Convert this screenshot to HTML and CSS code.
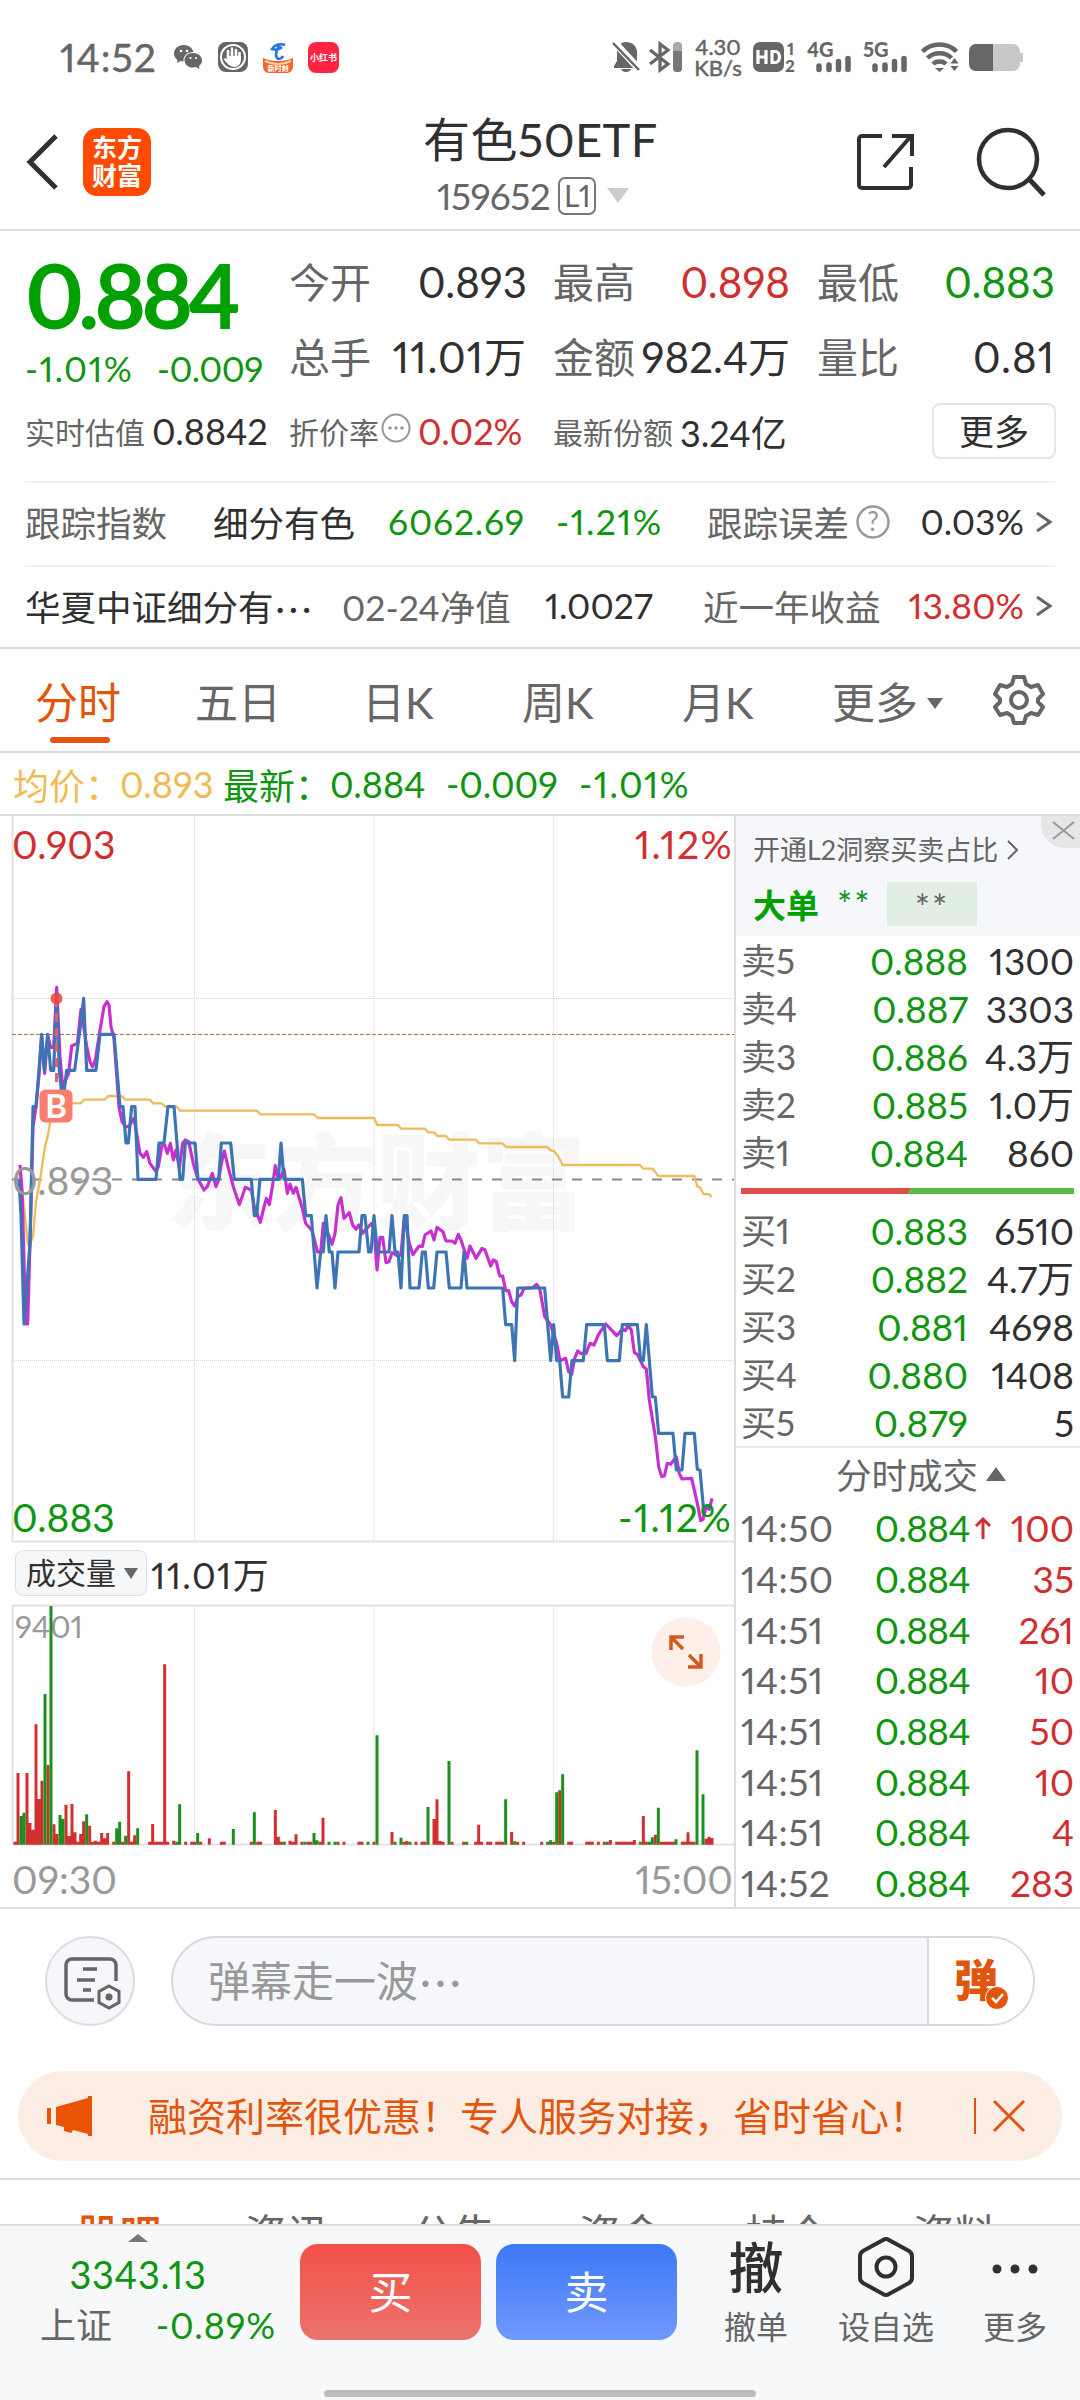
FILE: index.html
```html
<!DOCTYPE html>
<html lang="zh-CN">
<head>
    <meta charset="UTF-8">
    <meta name="viewport" content="width=device-width, initial-scale=1.0">
    <title>有色50ETF 159652</title>
    <link rel="stylesheet" href="styles.css">
</head>
<body>

    <div class="status">
        <span class="clock">14:52</span>
        <svg class="ic-wechat" width="30" height="26" viewBox="0 0 30 26"><path fill="#666" d="M11 1C5 1 1 5 1 9.500c0 3 1.500 5 3.500 6.500L4 19l3.500-2 3 .5C10 12 14 8 20.500 8 19.500 4 15.500 1 11 1z"/><path fill="#666" d="M20 9c-5 0-8.500 3.200-8.500 7.200S15 23.500 20 23.500l3-.5 3.500 2-.5-3c2-1.500 3-3.500 3-5.800C29 12.200 25 9 20 9z"/><g fill="#fff"><circle cx="8" cy="7" r="1.300"/><circle cx="14" cy="7" r="1.300"/><circle cx="17.500" cy="14" r="1.100"/><circle cx="23" cy="14" r="1.100"/></g></svg>
        <svg class="ic-hand" width="30" height="30" viewBox="0 0 30 30"><rect width="30" height="30" rx="8" fill="#666"/><circle cx="15" cy="15" r="12" fill="none" stroke="#fff" stroke-width="2"/><path d="M10 17V9M14 15V6.500M18 15V8M21.500 17v-6" stroke="#fff" stroke-width="2.600" stroke-linecap="round"/><path d="M9 14h14v3c0 5-3 8-6.500 8S9 22 5.500 17l2-1 2 2z" fill="#fff"/></svg>
        <svg class="ic-tel" width="30" height="32" viewBox="0 0 30 32"><path d="M0 17c8 4 22 4 30 0v9a6 6 0 0 1-6 6H6a6 6 0 0 1-6-6z" fill="#f0662c"/><path d="M2 20c8 4 18 4 26 0" stroke="#ffd9a8" stroke-width="2" fill="none"/><text x="15" y="30" class="tel-text">新时刻</text><path d="M22 4c-5-2-11 0-13 4 3 1 7 1 10-2M17 3c-3 5-6 12-2 15 2 0 4-1 5-3" fill="none" stroke="#2477dd" stroke-width="2.600"/></svg>
        <span class="ic-xhs">小红书</span>
        <span class="grow"></span>
        <svg class="ic-bell" width="28" height="32" viewBox="0 0 28 32"><path d="M14 1c6 0 11 4 11 10v9l2 5v2H2v-2l3-5v-9c0-6 4-10 9-10zM9 28h10c-1 4-9 4-10 0z" fill="#666"/><path d="M2 1l27 29" stroke="#fff" stroke-width="7"/><path d="M1 2l26 27" stroke="#666" stroke-width="2.500"/></svg>
        <svg class="ic-bt" width="34" height="30" viewBox="0 0 34 30"><path d="M1 8l18 14-8 6V2l8 6L1 22" fill="none" stroke="#666" stroke-width="3.200"/><rect x="24" width="9" height="30" rx="4" fill="#aaa"/><path d="M24 9h9v17a4 4 0 0 1-4 4h-1a4 4 0 0 1-4-4z" fill="#777"/></svg>
        <span class="speed">4.30<br>KB/s</span>
        <svg class="ic-hd" width="44" height="32" viewBox="0 0 44 32"><rect y="1" width="31" height="30" rx="7" fill="#666"/><path d="M5 9v14M13 9v14M5 16h8M19 10.500h3c6 0 6 11 0 11h-3z" stroke="#fff" stroke-width="3.200" fill="none"/><text x="34" y="14" class="sim">1</text><text x="32" y="31" class="sim">2</text></svg>
        <svg class="ic-sig" width="46" height="32" viewBox="0 0 46 32"><text x="0" y="16" class="net">4G</text><path d="M12 25v3.500M22 24v4.500M31.500 20.500v8M41 17.500v11" stroke="#666" stroke-width="5.500" stroke-linecap="round"/></svg>
        <svg class="ic-sig" width="46" height="32" viewBox="0 0 46 32"><text x="0" y="16" class="net">5G</text><path d="M12 25v3.500M22 24v4.500M31.500 20.500v8M41 17.500v11" stroke="#666" stroke-width="5.500" stroke-linecap="round"/></svg>
        <svg class="ic-wifi" width="38" height="30" viewBox="0 0 38 30"><g fill="none" stroke="#666" stroke-width="4.500"><path d="M1.500 9.500c9-9.500 25-9.500 34 0"/><path d="M6.500 16c6-6.500 18-6.500 24 0"/><path d="M12 22c3-3.500 10-3.500 13 0"/></g><path d="M14 26h9l-4.500 4z" fill="#666"/><path d="M33.500 16l4 5.500h-8zM33.500 29l4-5h-8z" fill="#666"/></svg>
        <span class="battery"><i></i></span>
    </div>

    <header class="header">
        <svg class="back" width="34" height="56" viewBox="0 0 34 56"><path d="M30 2L4 28l26 26" fill="none" stroke="#303030" stroke-width="5"/></svg>
        <div class="logo">东方<br>财富</div>
        <div class="title">
            <h1>有色50ETF</h1>
            <div class="code">159652<span class="level">L1</span><i class="tri-down"></i></div>
        </div>
        <svg class="share" width="60" height="60" viewBox="0 0 60 60"><path d="M26 4H6a3 3 0 0 0-3 3v46a3 3 0 0 0 3 3h46a3 3 0 0 0 3-3V35M36 4h20v20M56 3L28 35" fill="none" stroke="#303030" stroke-width="4"/></svg>
        <svg class="search" width="70" height="70" viewBox="0 0 70 70"><circle cx="32" cy="32" r="29" fill="none" stroke="#303030" stroke-width="4.500"/><path d="M53 52l15 16" stroke="#303030" stroke-width="5"/></svg>
    </header>

    <section class="quote">
        <div class="quote-main">
            <div class="last">
                <div class="price">0.884</div>
                <div class="change"><span class="pct">-1.01%</span><span>-0.009</span></div>
            </div>
            <dl class="stats">
                <dt>今开</dt><dd>0.893</dd>
                <dt>最高</dt><dd class="up">0.898</dd>
                <dt>最低</dt><dd class="down">0.883</dd>
                <dt>总手</dt><dd class="wide">11.01万</dd>
                <dt>金额</dt><dd>982.4万</dd>
                <dt>量比</dt><dd class="wide">0.81</dd>
            </dl>
        </div>
        <div class="quote-extra">
            <span class="pair"><small>实时估值</small><b>0.8842</b></span>
            <span class="pair"><small>折价率</small><svg width="30" height="30" viewBox="0 0 30 30"><circle cx="15" cy="15" r="13.500" fill="none" stroke="#999" stroke-width="2"/><g fill="#999"><circle cx="9" cy="15" r="1.800"/><circle cx="15" cy="15" r="1.800"/><circle cx="21" cy="15" r="1.800"/></g></svg><b class="up">0.02%</b></span>
            <span class="pair"><small>最新份额</small><b>3.24亿</b></span>
            <button class="more">更多</button>
        </div>
        <div class="line track">
            <span class="gray">跟踪指数</span>
            <span>细分有色</span>
            <span class="down points">6062.69</span>
            <span class="down pct">-1.21%</span>
            <span class="gray">跟踪误差</span>
            <svg width="34" height="34" viewBox="0 0 34 34"><circle cx="17" cy="17" r="15.500" fill="none" stroke="#999" stroke-width="2.500"/><text x="17" y="26" class="ask">?</text></svg>
            <span class="end">0.03%</span>
            <svg width="18" height="22" viewBox="0 0 18 22"><path d="M2 2l13 9-13 9" fill="none" stroke="#666" stroke-width="3"/></svg>
        </div>
        <div class="line fund">
            <span>华夏中证细分有<span class="dots">···</span></span>
            <span class="gray">02-24净值</span>
            <span>1.0027</span>
            <span class="gray">近一年收益</span>
            <span class="up end">13.80%</span>
            <svg width="18" height="22" viewBox="0 0 18 22"><path d="M2 2l13 9-13 9" fill="none" stroke="#666" stroke-width="3"/></svg>
        </div>
    </section>

    <nav class="tabs">
        <span class="active">分时</span>
        <span>五日</span>
        <span>日K</span>
        <span>周K</span>
        <span>月K</span>
        <span>更多<i class="tri-small"></i></span>
        <svg width="52" height="52" viewBox="0 0 52 52"><g fill="none" stroke="#666" stroke-width="4" stroke-linejoin="round"><path d="M21 3h10l2 7 5 3 7-2 5 9-5 5v3l5 5-5 8-7-2-5 3-2 7H21l-2-7-5-3-7 2-5-8 5-5v-3l-5-5 5-9 7 2 5-3z"/><circle cx="26" cy="26" r="8"/></g></svg>
    </nav>

    <div class="legend">
        <span class="avg">均价：</span><span class="avg">0.893</span>
        <span>最新：</span><span>0.884</span><span>-0.009</span><span class="pct">-1.01%</span>
    </div>

    <main class="board">
        <div class="charts">
            <svg class="price-chart" width="734" height="727" viewBox="0 816 734 727">
                <g class="watermark"><text x="166" y="1221">东方财富</text></g>
                <g class="frame">
                    <path d="M12.500 816v726M12 1541.500h722"/>
                </g>
                <path class="grid" d="M194.500 816v726M374 816v726M553.500 816v726M12 998.500h722M12 1360.500h722"/>
                <path class="cost" d="M12 1034.500h722"/>
                <path class="base" d="M12 1179.500h722"/>
                <g transform="translate(0 960) scale(.33333)" fill="none" stroke-linejoin="round">
                    <polyline class="l-avg" points="60,640 66,690 84,853 90,853 99,830 108,725 120,660 135,560 144,525 153,470 165,450 190,440 210,430 242,430 252,419 314,419 325,408 365,408 376,419 450,419 459,430 485,430 495,440 530,440 540,452 770,452 782,463 942,463 953,474 1122,474 1132,495 1194,495 1204,506 1275,506 1285,517 1302,517 1312,528 1338,528 1348,539 1427,539 1437,550 1507,550 1518,561 1642,561 1652,571 1662,573 1675,590 1688,615 1920,615 1930,626 1958,626 1975,648 2083,648 2092,680 2100,682 2110,702 2128,703 2135,712"/>
                    <polyline class="l-index" points="60,615 66,690 72,900 76,1092 83,1092 90,850 99,500 108,440 117,345 125,225 134,340 143,225 152,262 161,262 170,82 180,290 188,380 206,340 215,258 232,250 243,148 251,200 260,258 270,305 278,320 286,300 300,210 312,140 321,125 327,135 333,200 342,235 357,440 366,485 378,500 386,500 402,475 420,580 430,592 440,575 450,610 468,635 475,620 487,550 494,555 502,580 511,550 520,600 528,570 538,625 548,550 556,540 566,545 580,610 594,658 612,690 622,680 637,640 648,680 656,660 664,610 673,573 684,620 700,680 718,734 736,682 754,690 763,740 781,787 790,750 799,715 808,734 817,680 826,617 835,658 843,650 852,628 862,700 870,672 880,700 888,682 907,745 917,790 936,812 953,876 962,876 970,790 988,830 996,853 1005,820 1014,735 1023,713 1032,775 1048,758 1058,795 1068,808 1076,795 1088,820 1100,805 1115,790 1122,810 1131,930 1140,832 1148,832 1158,908 1167,905 1176,878 1194,888 1203,885 1213,770 1228,850 1239,884 1257,858 1267,860 1275,825 1293,813 1302,840 1311,802 1329,815 1338,843 1356,843 1365,850 1375,823 1383,840 1401,895 1410,858 1428,895 1446,865 1455,870 1472,918 1480,900 1489,905 1499,948 1508,948 1517,992 1526,992 1535,1025 1544,1038 1555,1008 1563,1005 1572,985 1598,983 1610,973 1619,985 1634,1070 1652,1095 1670,1150 1680,1202 1697,1195 1706,1235 1715,1243 1724,1195 1733,1173 1742,1180 1758,1180 1770,1150 1782,1155 1795,1125 1817,1092 1830,1105 1850,1127 1867,1108 1876,1112 1885,1097 1894,1110 1903,1178 1912,1183 1930,1220 1939,1227 1948,1320 1966,1430 1976,1520 1985,1550 1993,1548 2002,1510 2012,1513 2029,1490 2038,1540 2046,1557 2075,1555 2092,1630 2102,1682 2109,1678 2118,1642 2128,1648 2136,1615"/>
                    <polyline class="l-price" points="57,658 63,767 72,1092 80,984 90,850 99,440 108,440 117,331 125,223 133,331 143,223 152,331 161,331 170,100 178,331 188,430 200,331 224,331 238,223 251,115 260,331 288,331 300,223 342,223 360,440 369,440 378,549 385,549 395,440 405,440 414,658 468,658 477,549 492,549 504,440 522,440 540,658 548,658 556,549 585,549 594,658 656,658 664,549 692,549 703,658 754,658 763,767 770,767 780,658 835,658 843,549 852,658 907,658 917,767 934,767 951,984 962,876 970,876 978,767 988,876 996,876 1005,984 1014,876 1077,876 1086,767 1095,767 1106,876 1113,876 1122,767 1132,876 1167,876 1176,767 1185,876 1194,876 1203,984 1213,767 1221,767 1230,984 1257,984 1267,876 1276,876 1285,984 1301,984 1311,876 1338,876 1348,984 1383,984 1392,876 1401,984 1508,984 1517,1094 1535,1094 1544,1202 1553,984 1634,984 1652,1202 1661,1094 1670,1202 1679,1202 1688,1311 1706,1311 1716,1202 1750,1202 1760,1094 1813,1094 1822,1202 1858,1202 1867,1094 1912,1094 1922,1202 1930,1202 1939,1094 1957,1310 1966,1312 1976,1420 2019,1420 2029,1530 2046,1530 2055,1420 2083,1420 2092,1528 2100,1530 2110,1640 2135,1640"/>
                </g>
                <path class="buy-line" d="M56.500 998v90"/>
                <circle cx="56.500" cy="998.500" r="6" fill="#f0443c" fill-opacity=".85"/>
                <rect x="39.500" y="1089.500" width="33" height="33" rx="6" fill="#fb7d72"/>
                <text x="56" y="1118" class="buy-mark">B</text>
                <text x="12" y="1195" class="ax gray-ax">0.893</text>
                <text x="12" y="859" class="ax up-ax">0.903</text>
                <text x="733" y="859" class="ax up-ax right">1.12%</text>
                <text x="12" y="1532" class="ax down-ax">0.883</text>
                <text x="732" y="1532" class="ax down-ax right">-1.12%</text>
            </svg>

            <div class="vol-head"><span class="picker">成交量<i class="tri-pick"></i></span><span class="pct">11.01万</span></div>

            <div class="vol-body">
                <svg class="vol-chart" width="734" height="241" viewBox="0 1605 734 241">
                    <path class="frame" d="M12.500 1605v240M12 1605.500h722M12 1844.500h722"/>
                    <path class="grid" d="M194.500 1606v238M374 1606v238M553.500 1606v238"/>
                    <text x="15" y="1638" class="vol-max">9401</text>
                    <g transform="translate(0 1530) scale(.33333)" stroke-width="9" fill="none">
                        <path stroke="#d23030" d="M45 944V935M54 944V729M81 944V729M90 944V879M99 944V899M108 944V583M117 944V807M126 944V752M162 944V883M171 944V912M198 944V824M207 944V918M216 944V822M225 944V907M234 944V935M242 944V912M251 944V874M269 944V887M278 944V935M287 944V932M296 944V935M305 944V909M314 944V925M323 944V909M341 944V935M368 944V935M386 944V724M395 944V935M404 944V916M449 944V935M458 944V882M467 944V935M476 944V935M485 944V935M494 944V403M503 944V935M521 944V932M557 944V935M575 944V935M584 944V935M602 944V935M628 944V925M664 944V935M673 944V935M754 944V935M773 944V935M782 944V935M826 944V840M835 944V920M844 944V935M870 944V932M879 944V935M888 944V913M906 944V935M924 944V935M933 944V935M960 944V935M969 944V863M1014 944V935M1032 944V935M1077 944V935M1086 944V935M1122 944V935M1176 944V906M1212 944V935M1221 944V933M1248 944V935M1266 944V935M1275 944V935M1302 944V867M1311 944V808M1320 944V933M1329 944V935M1356 944V935M1391 944V935M1427 944V935M1436 944V884M1445 944V935M1463 944V935M1472 944V935M1490 944V935M1499 944V935M1508 944V935M1535 944V906M1553 944V935M1571 944V935M1625 944V935M1661 944V935M1706 944V935M1715 944V935M1760 944V935M1769 944V935M1777 944V935M1795 944V935M1813 944V935M1831 944V930M1850 944V935M1859 944V935M1868 944V935M1877 944V935M1886 944V935M1895 944V935M1903 944V930M1930 944V858M1939 944V935M1966 944V914M1984 944V935M1993 944V935M2002 944V935M2011 944V935M2020 944V935M2047 944V935M2055 944V935M2064 944V907M2073 944V935M2082 944V935M2118 944V926M2127 944V920M2136 944V924"/>
                        <path stroke="#1c901c" d="M63 944V858M72 944V848M135 944V492M153 944V228M180 944V855M189 944V867M260 944V853M350 944V895M359 944V875M377 944V917M413 944V895M530 944V935M539 944V823M593 944V909M700 944V897M763 944V847M853 944V935M915 944V935M942 944V909M951 944V931M987 944V935M1005 944V935M1104 944V935M1131 944V616M1185 944V935M1203 944V923M1230 944V935M1284 944V831M1347 944V693M1400 944V935M1517 944V808M1544 944V934M1643 944V935M1652 944V931M1670 944V787M1688 944V733M1822 944V935M1921 944V935M1948 944V935M1957 944V922M1975 944V833M2028 944V928M2091 944V661M2109 944V793"/>
                        <path stroke="#a04a1c" d="M144 944V705M1679 944V781"/>
                    </g>
                </svg>
                <svg class="expand" width="70" height="70" viewBox="0 0 70 70"><circle cx="35" cy="35" r="34.500" fill="#fef0e9"/><path d="M33 20H20v13M20 20l12 12M38 38l12 12M50 37v13H37" fill="none" stroke="#d4581a" stroke-width="3.500"/></svg>
            </div>
            <div class="times"><span>09:30</span><span>15:00</span></div>
        </div>

        <aside class="depth">
            <div class="l2">
                <svg class="l2-close" width="39" height="32" viewBox="0 0 39 32"><path d="M0 0h39v32H24A24 24 0 0 1 0 8z" fill="#e5e6e8"/><path d="M12 6l21 17M33 6L12 23" stroke="#999" stroke-width="2"/></svg>
                <div class="l2-title">开通L2洞察买卖占比<svg width="12" height="22" viewBox="0 0 12 22"><path d="M1 2l9 9-9 9" fill="none" stroke="#666" stroke-width="2"/></svg></div>
                <div class="l2-row"><b>大单</b><span class="stars">**</span><span class="mask">**</span></div>
            </div>
            <div class="orders">
                <div><span>卖5</span><b>0.888</b><em>1300</em></div>
                <div><span>卖4</span><b>0.887</b><em>3303</em></div>
                <div><span>卖3</span><b>0.886</b><em>4.3万</em></div>
                <div><span>卖2</span><b>0.885</b><em>1.0万</em></div>
                <div><span>卖1</span><b>0.884</b><em>860</em></div>
            </div>
            <div class="ratio"></div>
            <div class="orders">
                <div><span>买1</span><b>0.883</b><em>6510</em></div>
                <div><span>买2</span><b>0.882</b><em>4.7万</em></div>
                <div><span>买3</span><b>0.881</b><em>4698</em></div>
                <div><span>买4</span><b>0.880</b><em>1408</em></div>
                <div><span>买5</span><b>0.879</b><em>5</em></div>
            </div>
            <div class="deal-title">分时成交<i class="tri-up"></i></div>
            <div class="deals">
                <div><span>14:50</span><b>0.884</b><svg width="16" height="22" viewBox="0 0 16 22"><path d="M8 22V2M1 9l7-7 7 7" fill="none" stroke="#d12f2f" stroke-width="3"/></svg><em>100</em></div>
                <div><span>14:50</span><b>0.884</b><i></i><em>35</em></div>
                <div><span>14:51</span><b>0.884</b><i></i><em>261</em></div>
                <div><span>14:51</span><b>0.884</b><i></i><em>10</em></div>
                <div><span>14:51</span><b>0.884</b><i></i><em>50</em></div>
                <div><span>14:51</span><b>0.884</b><i></i><em>10</em></div>
                <div><span>14:51</span><b>0.884</b><i></i><em>4</em></div>
                <div><span>14:52</span><b>0.884</b><i></i><em>283</em></div>
            </div>
        </aside>
    </main>

    <div class="danmu">
        <span class="danmu-set"><svg width="56" height="52" viewBox="0 0 56 52"><path d="M30 43H8a6 6 0 0 1-6-6V8a6 6 0 0 1 6-6h38a6 6 0 0 1 6 6v16" fill="none" stroke="#666" stroke-width="3.500"/><path d="M19 12h14M13 23h18M19 33h8" stroke="#666" stroke-width="3.500"/><path d="M45 29l10 5.500v11L45 51l-10-5.500v-11z" fill="none" stroke="#666" stroke-width="3"/><circle cx="45" cy="40" r="3.500" fill="#666"/></svg></span>
        <div class="danmu-input">
            <span class="placeholder">弹幕走一波<span class="dots">···</span></span>
            <span class="danmu-btn">弹<svg width="24" height="24" viewBox="0 0 24 24"><circle cx="12" cy="12" r="11.500" fill="#e1560c" stroke="#fff"/><path d="M7 12l4 4 7-8" fill="none" stroke="#fff" stroke-width="2.500"/></svg></span>
        </div>
    </div>

    <div class="notice">
        <svg width="48" height="42" viewBox="0 0 48 42"><path d="M2 13v16" stroke="#e95504" stroke-width="4"/><path d="M9 12l32-9V1h4v40h-4v-2l-15-4-2 3-7-2v-4l-8-2z" fill="#e95504"/></svg>
        <p>融资利率很优惠！专人服务对接，省时省心！</p>
        <span class="bar"></span>
        <svg width="34" height="34" viewBox="0 0 34 34"><path d="M2 2l30 30M32 2L2 32" stroke="#e1560c" stroke-width="3"/></svg>
    </div>

    <nav class="subtabs">
        <span class="active">股吧</span><span>资讯</span><span>公告</span><span>资金</span><span>持仓</span><span>资料</span>
    </nav>

    <footer class="footer">
        <div class="index">
            <i class="tri-index"></i>
            <div class="index-value">3343.13</div>
            <div class="index-row"><span>上证</span><span class="down">-0.89%</span></div>
        </div>
        <button class="buy">买</button>
        <button class="sell">卖</button>
        <div class="tool"><span class="tool-char">撤</span><span>撤单</span></div>
        <div class="tool"><svg width="56" height="60" viewBox="0 0 56 60"><path d="M25 3q3-2 6 0l20 11q3 2 3 5v22q0 3-3 5L31 57q-3 2-6 0L5 46q-3-2-3-5V19q0-3 3-5z" fill="none" stroke="#303030" stroke-width="4"/><circle cx="28" cy="30" r="9.500" fill="none" stroke="#303030" stroke-width="4"/></svg><span>设自选</span></div>
        <div class="tool"><svg width="48" height="60" viewBox="0 0 48 60"><g fill="#303030"><circle cx="6" cy="32" r="4.500"/><circle cx="24" cy="32" r="4.500"/><circle cx="42" cy="32" r="4.500"/></g></svg><span>更多</span></div>
        <span class="home-bar"></span>
    </footer>

</body>
</html>
```
FILE: styles.css
```css
* {
    box-sizing: border-box;
}
body {
    margin: 0;
    width: 1080px;
    height: 2400px;
    overflow: hidden;
    background: #fff;
    color: #303030;
    font-family: Lato, "Noto Sans CJK SC", sans-serif;
    font-variant-numeric: proportional-nums;
    display: flex;
    flex-direction: column;
}
body > * {
    flex: none;
}
h1, p, dl, dd {
    margin: 0;
    font-weight: normal;
}
i, em {
    font-style: normal;
}
svg {
    display: block;
    flex: none;
    overflow: visible;
}
button {
    font-family: inherit;
    padding: 0;
    border: 0;
}
.grow { flex: 1; }
.up { color: #d12f2f; }
.down { color: #109510; }
.gray { color: #666; }
.end { text-align: right; }
.dots { letter-spacing: 4px; padding-left: 2px; }

/* status bar */
.status {
    height: 100px;
    padding: 14px 60px 0 60px;
    display: flex;
    align-items: center;
    color: #666;
}
.clock {
    width: 113px;
    font-size: 39px;
    letter-spacing: 1px;
    -webkit-text-stroke: .4px #666;
}
.ic-hand { margin-left: 15px; }
.ic-tel { margin-left: 15px; }
.tel-text {
    font-size: 7px;
    font-weight: bold;
    fill: #fff;
    text-anchor: middle;
}
.ic-xhs {
    width: 31px;
    height: 31px;
    margin-left: 15px;
    border-radius: 8px;
    background: #ff2442;
    color: #fff;
    font-size: 9px;
    font-weight: bold;
    line-height: 31px;
    text-align: center;
}
.ic-bt { margin-left: 9px; }
.speed {
    width: 50px;
    margin-left: 10px;
    font-size: 22px;
    line-height: 21px;
    text-align: center;
    -webkit-text-stroke: .5px #666;
}
.ic-hd { margin-left: 10px; }
.sim { font-size: 17px; font-weight: 900; fill: #666; }
.net { font-size: 20px; font-weight: 900; fill: #666; }
.ic-sig { margin-left: 10px; }
.ic-wifi { margin-left: 12px; }
.battery {
    position: relative;
    width: 51px;
    height: 27px;
    margin-left: 10px;
    border-radius: 7px;
    background: #c8c8c8;
}
.battery::after {
    content: "";
    position: absolute;
    right: -3px;
    top: 9px;
    width: 3px;
    height: 9px;
    background: #c8c8c8;
}
.battery i {
    display: block;
    width: 24px;
    height: 27px;
    border-radius: 7px 0 0 7px;
    background: #666;
}

/* header */
.header {
    height: 131px;
    border-bottom: 2px solid #ddd;
    padding: 0 34px 0 26px;
    display: grid;
    grid-template-columns: 57px 68px 1fr 60px 70px;
    align-items: center;
}
.logo {
    width: 68px;
    height: 68px;
    border-radius: 14px;
    background: #ff4a00;
    color: #fff;
    font-size: 25px;
    font-weight: bold;
    line-height: 28px;
    text-align: center;
    padding-top: 5px;
}
.header .logo, .header .back, .header .share, .header .search { margin-top: -5px; }
.header .share { margin-left: -60px; }
.title {
    padding: 5px 0 0 272px;
    white-space: nowrap;
}
.title h1 {
    font-size: 47px;
    line-height: 57px;
    letter-spacing: .4px;
}
.code {
    display: flex;
    align-items: center;
    padding-left: 14px;
    color: #666;
    font-size: 37px;
    line-height: 56px;
    letter-spacing: -.6px;
}
.level {
    width: 38px;
    height: 38px;
    margin-left: 8px;
    border: 2px solid #777;
    border-radius: 7px;
    font-size: 30px;
    line-height: 33px;
    text-align: center;
}
.tri-down, .tri-small, .tri-pick {
    display: inline-block;
    border: 11px solid transparent;
    border-top: 15px solid #ccc;
    border-bottom: 0;
    margin-left: 11px;
}

/* quote */
.quote {
    height: 418px;
    border-bottom: 2px solid #ddd;
    padding: 0 25px;
}
.quote-main {
    display: grid;
    grid-template-columns: 264px 1fr;
    height: 163px;
    padding-top: 14px;
}
.price {
    height: 100px;
    color: #00a000;
    font-size: 89px;
    font-weight: bold;
    line-height: 100px;
    letter-spacing: -5.5px;
}
.change {
    display: grid;
    grid-template-columns: 132px 1fr;
    color: #109510;
    font-size: 35px;
    line-height: 46px;
    letter-spacing: -.5px;
}
.pct { letter-spacing: 1.4px; }
.stats {
    display: grid;
    grid-template-columns: 84px 154px 26px 84px 153px 27px 84px 154px;
    grid-auto-rows: 75px;
    line-height: 75px;
    font-size: 42px;
}
.stats dt {
    color: #666;
    font-size: 41px;
}
.stats dt:nth-of-type(3n+2) { grid-column: 4; }
.stats dt:nth-of-type(3n) { grid-column: 7; }
.stats dd {
    text-align: right;
    white-space: nowrap;
}
.stats .wide { letter-spacing: .9px; }
.quote-extra {
    display: grid;
    grid-template-columns: 264px 264px 379px 124px;
    height: 87px;
    padding-bottom: 14px;
    align-items: center;
}
.pair {
    display: flex;
    align-items: center;
    white-space: nowrap;
}
.pair small {
    color: #666;
    font-size: 30px;
}
.pair svg { margin: 0 0 6px 2px; }
.pair b {
    font-weight: normal;
    font-size: 36px;
    margin-left: 7px;
}
.more {
    height: 56px;
    border: 2px solid #e5e5e5;
    border-radius: 8px;
    background: #fff;
    color: #303030;
    font-size: 35px;
    line-height: 48px;
}
.line {
    display: grid;
    align-items: center;
    height: 84px;
    padding-bottom: 5px;
    border-top: 2px solid #f0f0f0;
    font-size: 35.5px;
    white-space: nowrap;
}
.points { letter-spacing: .8px; }
.track { grid-template-columns: 188px 175px 168px 151px 149px 36px 132px 1fr; }
.fund { grid-template-columns: 317px 203px 158px 182px 139px 1fr; }
.line svg:last-child { margin-left: 11px; }
.ask { font-size: 26px; fill: #999; text-anchor: middle; }

/* tabs */
.tabs {
    height: 104px;
    border-bottom: 2px solid #ddd;
    padding-left: 35px;
    display: grid;
    grid-template-columns: 160px 167px 160px 160px 150px 161px 1fr;
    align-items: center;
    color: #666;
    font-size: 43px;
}
.tabs .active {
    position: relative;
    color: #e1560c;
}
.tabs .active::after {
    content: "";
    position: absolute;
    left: 15px;
    bottom: -12px;
    width: 60px;
    height: 6px;
    border-radius: 3px;
    background: #e1560c;
}
.tri-small {
    border-width: 11px 8px 0;
    border-top-color: #666;
    margin-left: 9px;
    vertical-align: 10px;
}
.legend {
    height: 63px;
    border-bottom: 2px solid #ddd;
    padding-left: 13px;
    display: grid;
    grid-template-columns: 107px 103px 107px 116px 133px 1fr;
    align-items: center;
    color: #109510;
    font-size: 36px;
    white-space: nowrap;
}
.legend .avg { color: #efbb55; }

/* charts */
.board {
    display: grid;
    grid-template-columns: 734px 1fr;
    height: 1093px;
    border-bottom: 2px solid #ddd;
}
.frame, .frame path {
    fill: none;
    stroke: #e2e2e2;
    stroke-width: 2;
}
.grid {
    fill: none;
    stroke: #d4d4d4;
    stroke-width: 1;
    stroke-dasharray: 1 1;
}
.watermark text {
    font-size: 105px;
    font-weight: 900;
    fill: #f7f7f7;
}
.cost { stroke: #b0704a; stroke-dasharray: 4 2; }
.base { stroke: #8a8a8a; stroke-width: 2; stroke-dasharray: 10 10; }
.l-avg { stroke: #edbb5c; stroke-width: 7; }
.l-index { stroke: #c82fd0; stroke-width: 9.5; }
.l-price { stroke: #3c74b4; stroke-width: 9.5; }
.buy-line { stroke: #e2606a; stroke-width: 3; stroke-dasharray: 9 6; }
.buy-mark { font-size: 33px; font-weight: bold; fill: #fff; text-anchor: middle; }
.ax { font-size: 39px; }
.right { text-anchor: end; letter-spacing: 1.3px; }
.gray-ax { fill: #999; }
.up-ax { fill: #d12f2f; }
.down-ax { fill: #109510; }
.vol-head {
    height: 62px;
    padding: 0 0 3px 15px;
    display: flex;
    align-items: center;
    font-size: 36px;
}
.picker {
    width: 132px;
    height: 46px;
    margin-right: 4px;
    border: 1px solid #e0e0e4;
    border-radius: 8px;
    background: #f6f7f9;
    font-size: 30px;
    line-height: 43px;
    padding-left: 10px;
}
.tri-pick {
    border-width: 11px 7px 0;
    border-top-color: #666;
    margin-left: 8px;
    vertical-align: 5px;
}
.vol-body { position: relative; }
.vol-max { font-size: 31px; fill: #999; }
.expand {
    position: absolute;
    top: 12px;
    right: 13px;
}
.times {
    display: flex;
    justify-content: space-between;
    padding: 8px 1px 0 12px;
    color: #999;
    font-size: 39px;
    line-height: 50px;
}

/* order book */
.depth {
    border-left: 2px solid #ddd;
}
.l2 {
    position: relative;
    height: 120px;
    padding: 13px 0 0 17px;
    background: #f6f7fa;
}
.l2-close {
    position: absolute;
    top: 0;
    right: 0;
}
.l2-title {
    display: flex;
    align-items: center;
    gap: 9px;
    color: #666;
    font-size: 27px;
    line-height: 42px;
}
.l2-row {
    display: flex;
    align-items: center;
    margin-top: 11px;
    height: 44px;
    font-size: 33px;
}
.l2-row b {
    color: #00a000;
    width: 84px;
}
.stars, .mask {
    font-size: 36px;
    line-height: 50px;
    letter-spacing: 2px;
}
.stars {
    color: #109510;
    width: 50px;
}
.mask {
    width: 90px;
    height: 44px;
    background: #e0efe2;
    color: #666;
    text-align: center;
}
.orders {
    padding: 1px 6px 0 5px;
    font-size: 37px;
}
.orders div {
    display: grid;
    grid-template-columns: 100px 127px 1fr;
    height: 48px;
    line-height: 47px;
    white-space: nowrap;
}
.orders span {
    color: #666;
    font-size: 35px;
}
.orders b, .deals b {
    font-weight: normal;
    color: #109510;
    text-align: right;
}
.orders em, .deals em {
    text-align: right;
}
.ratio {
    height: 6px;
    margin: 11px 6px 12px 5px;
    background: linear-gradient(120deg, #e04c4c 50.5%, #5db84a 50.5%);
}
.deal-title {
    height: 57px;
    border-top: 2px solid #e8e8e8;
    display: flex;
    justify-content: center;
    align-items: center;
    gap: 8px;
    padding: 0 0 4px 26px;
    color: #666;
    font-size: 35.5px;
}
.orders + .deal-title { margin-top: -1px; }
.tri-up, .tri-index {
    border: 10px solid transparent;
    border-top: 0;
    border-bottom: 14px solid #666;
}
.deals {
    padding: 0 6px 0 5px;
    font-size: 37px;
}
.deals div {
    display: grid;
    grid-template-columns: 100px 129px 21px 1fr;
    justify-items: end;
    align-items: center;
    height: 50.7px;
    line-height: 50px;
}
.deals span {
    color: #666;
    justify-self: start;
    letter-spacing: .4px;
}
.deals b { letter-spacing: -.6px; }
.deals em { color: #d12f2f; }

/* danmu input */
.danmu {
    display: flex;
    gap: 36px;
    padding: 27px 45px 0 45px;
    height: 162px;
}
.danmu-set {
    width: 90px;
    height: 90px;
    border: 2px solid #dcdee2;
    border-radius: 50%;
    background: #f6f7fa;
    padding: 19px 0 0 17px;
}
.danmu-input {
    flex: 1;
    height: 90px;
    border: 2px solid #d8dadd;
    border-radius: 45px;
    background: #f6f7fa;
    display: flex;
    overflow: hidden;
    line-height: 86px;
}
.placeholder {
    flex: 1;
    padding-left: 35px;
    color: #999;
    font-size: 42px;
}
.danmu-btn {
    position: relative;
    width: 106px;
    border-left: 2px solid #d8dadd;
    background: #fff;
    color: #e1560c;
    font-size: 44px;
    font-weight: 900;
    line-height: 84px;
    padding-left: 25px;
}
.danmu-btn svg {
    position: absolute;
    left: 56px;
    top: 48px;
}

/* notice */
.notice {
    height: 90px;
    margin: 0 18px;
    border-radius: 45px;
    background: #fcede4;
    color: #e1560c;
    padding-left: 29px;
    display: flex;
    align-items: center;
}
.notice p {
    width: 826px;
    margin: -4px 0 0 53px;
    font-size: 39px;
    white-space: nowrap;
}
.bar {
    width: 2px;
    height: 36px;
    margin-right: 16px;
    background: #e1560c;
}

.subtabs {
    height: 46px;
    margin-top: 17px;
    border-top: 2px solid #ddd;
    padding: 24px 39px 0 36px;
    display: grid;
    grid-template-columns: repeat(6, 167px);
    text-align: center;
    color: #666;
    font-size: 42px;
    line-height: 60px;
    overflow: hidden;
}
.subtabs .active { color: #e1560c; font-weight: 500; }

/* footer */
.footer {
    position: relative;
    height: 176px;
    border-top: 2px solid #ddd;
    background: #f7f8fa;
    display: grid;
    grid-template-columns: 300px 181px 15px 181px 24px 110px 150px 108px;
    align-items: start;
}
.index {
    text-align: center;
    padding-top: 8px;
    padding-right: 24px;
}
.tri-index {
    display: block;
    width: 0;
    margin: 0 auto;
    border-bottom: 8px solid #777;
}
.index-value {
    color: #109510;
    font-size: 38px;
    line-height: 64px;
    letter-spacing: .6px;
}
.index-row {
    display: flex;
    justify-content: space-between;
    padding-left: 40px;
    font-size: 36px;
    line-height: 38px;
    color: #666;
}
.index-row .down { color: #109510; letter-spacing: .9px; }
.buy, .sell {
    height: 96px;
    margin-top: 18px;
    border-radius: 18px;
    padding-bottom: 4px;
    color: #fff;
    font-size: 44px;
}
.buy { background: linear-gradient(#f35148, #eb736d); }
.sell {
    grid-column: 4;
    background: linear-gradient(#3d78f8, #7099fc);
}
.tool {
    display: flex;
    flex-direction: column;
    align-items: center;
    padding-top: 11px;
    color: #666;
    font-size: 32px;
    line-height: 60px;
}
.sell + .tool { grid-column: 6; }
.tool-char {
    color: #303030;
    font-size: 55px;
    font-weight: 500;
}
.home-bar {
    position: absolute;
    left: 324px;
    bottom: 3px;
    width: 432px;
    height: 7px;
    border-radius: 4px;
    background: #bbbcbe;
}
```
